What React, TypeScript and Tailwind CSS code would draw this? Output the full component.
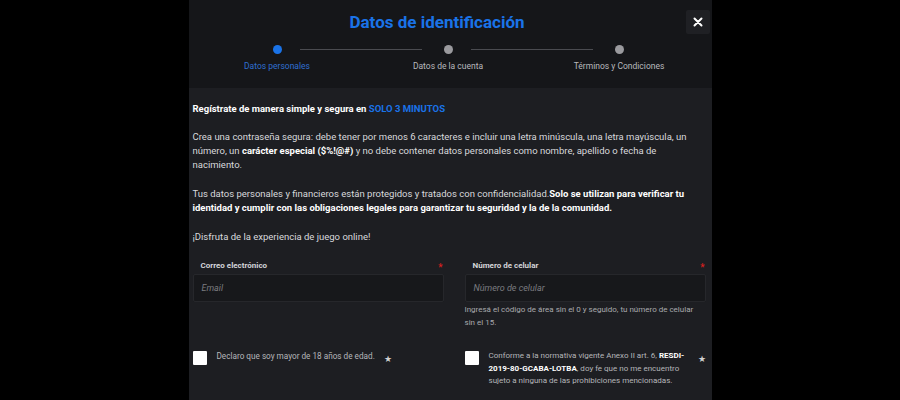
import React from 'react';

const steps = [
  { label: 'Datos personales', active: true },
  { label: 'Datos de la cuenta', active: false },
  { label: 'Términos y Condiciones', active: false },
];

function Stepper() {
  return (
    <div className="relative mt-[11px] flex justify-center pr-[4px]">
      <div className="grid grid-cols-[171px_171px_171px]">
        {steps.map((s, i) => (
          <div key={s.label} className="relative flex flex-col items-center">
            {i < steps.length - 1 && (
              <div className="absolute left-[108px] top-[4px] h-px w-[122px] bg-[#4a4b50]" />
            )}
            <div
              className={
                s.active
                  ? 'h-[9px] w-[9px] rounded-full bg-[#1a73e8]'
                  : 'h-[9px] w-[9px] rounded-full bg-[#9a9a9e]'
              }
            />
            <span
              className={
                s.active
                  ? 'mt-[6px] text-[8.5px] leading-[12px] text-[#2f6fd0]'
                  : 'mt-[6px] text-[8.5px] leading-[12px] text-[#b8b9bd]'
              }
            >
              {s.label}
            </span>
          </div>
        ))}
      </div>
    </div>
  );
}

function Field({ label, placeholder, help }: { label: string; placeholder: string; help?: string }) {
  return (
    <div className="flex flex-col">
      <div className="flex items-start justify-between pl-[8px] pr-[1px] pt-[2px]">
        <span className="text-[8px] font-bold leading-[12px] text-[#d4d5d9]">{label}</span>
        <span className="mt-[3px] text-[10px] leading-[10px] text-[#e0201f]">*</span>
      </div>
      <div className="mt-[1px] flex h-[28px] items-center rounded-[2px] border border-[#26272b] bg-[#17181b] px-[8px]">
        <span className="text-[9px] italic text-[#7b7c80]">{placeholder}</span>
      </div>
      {help && (
        <p className="mt-[1px] text-[8px] leading-[13px] text-[#a9aaae]">{help}</p>
      )}
    </div>
  );
}

export default function App() {
  return (
    <div
      className="flex h-[400px] w-full justify-center overflow-hidden bg-black"
      style={{ fontFamily: 'Roboto, "Liberation Sans", sans-serif' }}
    >
      <div className="flex w-[523px] flex-col bg-[#1d1e22]">
        {/* Header */}
        <div className="h-[88px] bg-[#151619] pt-[10px]">
          <div className="flex items-start pr-[2px]">
            <h1 className="flex-1 pt-[1px] text-center text-[17px] font-bold leading-[22px] text-[#1a73e8]">
              Datos de identificación
            </h1>
            <button className="flex h-[24px] w-[24px] items-center justify-center rounded-[2px] bg-[#1f2024]">
              <svg width="10" height="10" viewBox="0 0 10 10">
                <path d="M1.5 1.5 L8.5 8.5 M8.5 1.5 L1.5 8.5" stroke="#fff" strokeWidth="2" strokeLinecap="round" />
              </svg>
            </button>
          </div>
          <Stepper />
        </div>

        {/* Body */}
        <div className="flex flex-col pl-[4px] pr-[6px] pt-[14px] text-[9.5px] leading-[14px] text-[#d8d9dc]">
          <p className="font-bold text-white">
            Regístrate de manera simple y segura en{' '}
            <span className="text-[#1a73e8]">SOLO 3 MINUTOS</span>
          </p>
          <p className="mt-[14px]">
            Crea una contraseña segura: debe tener por menos 6 caracteres e incluir una letra minúscula, una letra mayúscula, un
            número, un <b className="text-white">carácter especial ($%!@#)</b> y no debe contener datos personales como nombre, apellido o fecha de
            nacimiento.
          </p>
          <p className="mt-[15px]">
            Tus datos personales y financieros están protegidos y tratados con confidencialidad.
            <b className="text-white">Solo se utilizan para verificar tu identidad y cumplir con las obligaciones legales para garantizar tu seguridad y la de la comunidad.</b>
          </p>
          <p className="mt-[15px]">¡Disfruta de la experiencia de juego online!</p>

          <div className="mt-[14px] grid grid-cols-[251px_241px] gap-x-[21px]">
            <Field label="Correo electrónico" placeholder="Email" />
            <Field
              label="Número de celular"
              placeholder="Número de celular"
              help="Ingresá el código de área sin el 0 y seguido, tu número de celular sin el 15."
            />
          </div>

          <div className="mt-[21px] grid grid-cols-[251px_241px] gap-x-[21px]">
            <label className="flex items-start">
              <span className="mt-[1px] h-[14px] w-[14px] shrink-0 rounded-[1px] bg-white" />
              <span className="ml-[10px] text-[8.2px] leading-[12.5px] text-[#b5b6ba]">
                Declaro que soy mayor de 18 años de edad.
              </span>
              <span className="ml-[9px] mt-[2px] text-[9px] text-[#d0d0d0]">★</span>
            </label>
            <label className="flex items-start">
              <span className="mt-[1px] h-[14px] w-[14px] shrink-0 rounded-[1px] bg-white" />
              <span className="ml-[10px] w-[200px] text-[8px] leading-[12.5px] text-[#b5b6ba]">
                Conforme a la normativa vigente Anexo II art. 6,{' '}
                <b className="text-white">RESDI-2019-80-GCABA-LOTBA</b>, doy fe que no me encuentro sujeto a ninguna de las prohibiciones mencionadas.
              </span>
              <span className="ml-auto mt-[2px] text-[9px] text-[#d0d0d0]">★</span>
            </label>
          </div>
        </div>
      </div>
    </div>
  );
}
